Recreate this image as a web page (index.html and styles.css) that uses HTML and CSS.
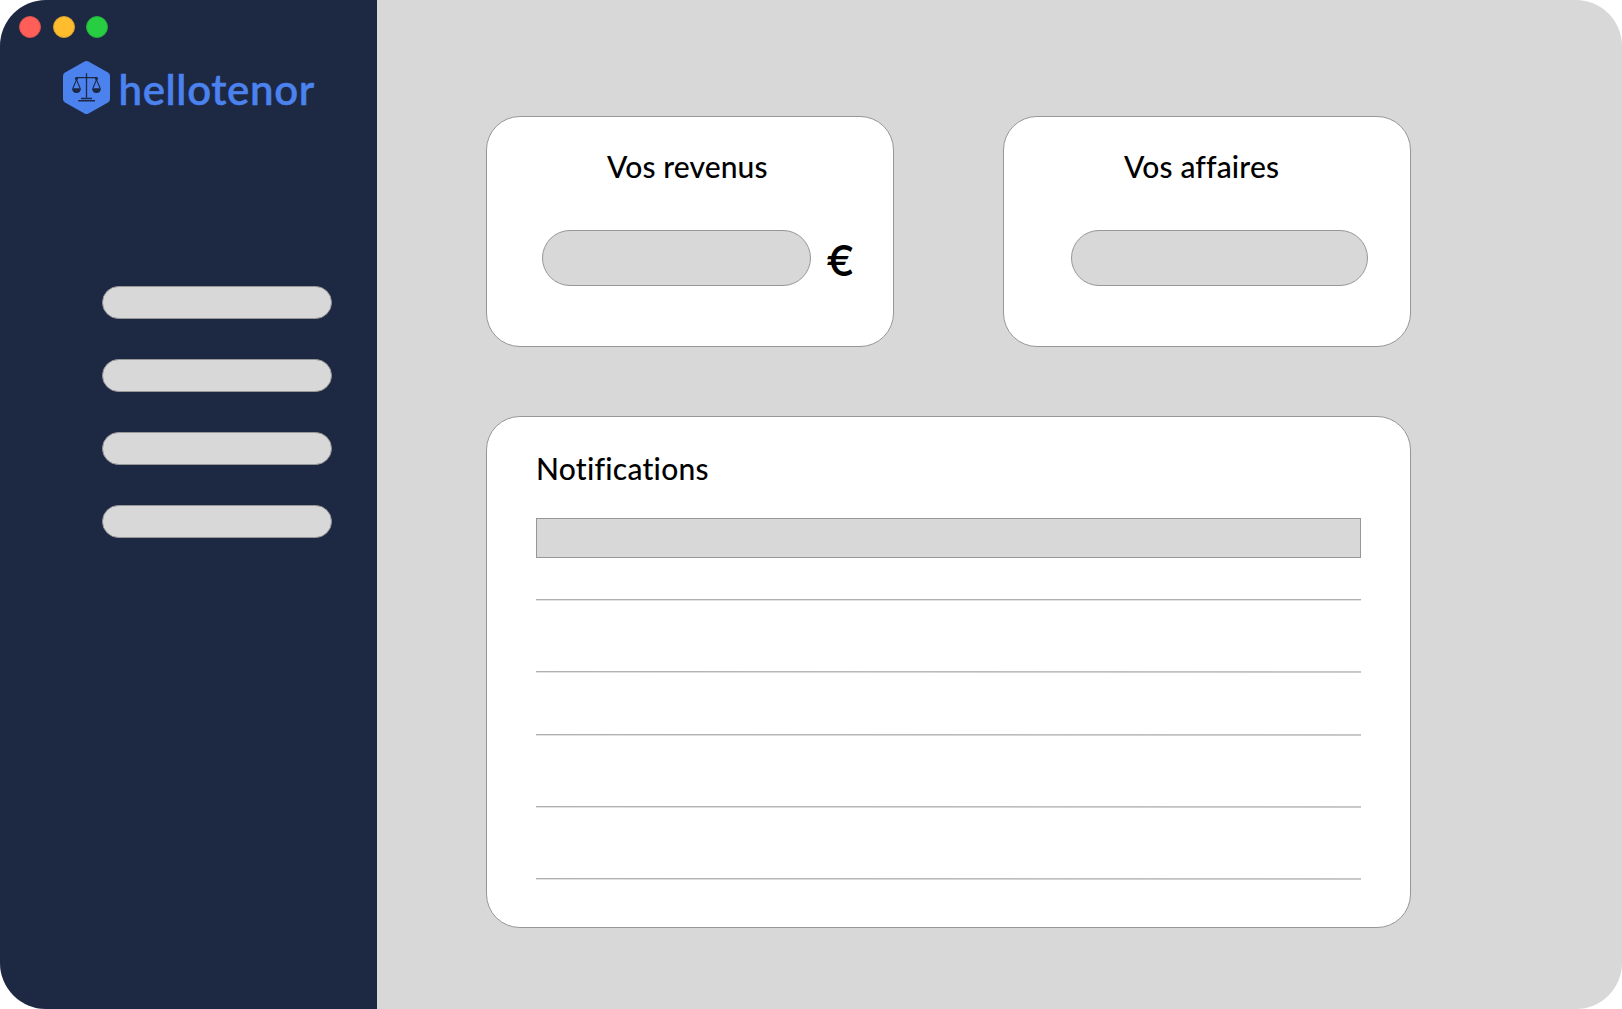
FILE: index.html
```html
<!DOCTYPE html>
<html lang="fr">
<head>
<meta charset="utf-8">
<title>hellotenor</title>
<link rel="stylesheet" href="styles.css">
</head>
<body>
<div class="window">
  <aside class="sidebar">
    <div class="controls">
      <span class="dot close"></span><span class="dot minimize"></span><span class="dot expand"></span>
    </div>
    <div class="brand">
      <svg class="brand-icon" width="47" height="53" viewBox="0 0 47 54" preserveAspectRatio="none">
        <path class="hexagon" d="M21.5 .6Q23.5-.5 25.5 .6L45 11.7Q47 12.9 47 15.2V38.8Q47 41.1 45 42.3L25.5 53.4Q23.5 54.5 21.5 53.4L2 42.3Q0 41.1 0 38.8V15.2Q0 12.9 2 11.7Z"/>
        <g class="scales">
          <path d="M23.5 12.5V37.5M13 17H34" stroke-width="1.3"/>
          <path d="M18 38.2H29M15.2 40.6H32" stroke-width="1.5"/>
          <path d="M13.5 19L10 27.5M13.5 19L17 27.5M33.5 19L30 27.5M33.5 19L37 27.5" stroke-width="1.1"/>
          <path class="pan" d="M9 27.8H18Q17.8 32.6 13.5 32.6T9 27.8ZM29 27.8H38Q37.8 32.6 33.5 32.6T29 27.8Z"/>
          <circle class="pan" cx="13.5" cy="17.8" r="1.6"/><circle class="pan" cx="33.5" cy="17.8" r="1.6"/>
        </g>
      </svg>
      <span class="brand-name">hellotenor</span>
    </div>
    <nav class="menu">
      <span class="menu-item"></span><span class="menu-item"></span><span class="menu-item"></span><span class="menu-item"></span>
    </nav>
  </aside>
  <main class="content">
    <section class="card">
      <h2 class="title revenue-title">Vos revenus</h2>
      <div class="value-row"><span class="value"></span><span class="currency">€</span></div>
    </section>
    <section class="card">
      <h2 class="title cases-title">Vos affaires</h2>
      <div class="value-row cases-row"><span class="value"></span></div>
    </section>
    <section class="card notifications">
      <h2 class="title">Notifications</h2>
      <div class="highlight"></div>
      <div class="rows">
        <hr class="rule"><hr class="rule"><hr class="rule"><hr class="rule"><hr class="rule">
      </div>
    </section>
  </main>
</div>
</body>
</html>
```
FILE: styles.css
```css
* { box-sizing: border-box; }
body { margin: 0; background: #fff; font-family: Lato, sans-serif; }
.window { display: flex; width: 1622px; height: 1009px; border-radius: 46px; overflow: hidden; background: #d8d8d8; }
.sidebar { width: 377px; flex: none; background: #1d2842; }
.controls { display: flex; gap: 12px; padding: 16px 0 0 19px; }
.dot { width: 22px; height: 22px; border-radius: 50%; border: 1px solid; }
.close { background: #ff5f58; border-color: #d8504e; }
.minimize { background: #ffbd2e; border-color: #d6a02f; }
.expand { background: #28ce42; border-color: #25ac3e; margin-left: -1px; }
.brand { display: flex; height: 54px; margin-top: 23px; padding-left: 63px; }
.brand-icon { flex: none; }
.hexagon { fill: #4b82ee; }
.scales { fill: none; stroke: #1d2842; }
.scales .pan { fill: #1d2842; stroke: none; }
.brand-name { margin-left: 8.5px; font-size: 42px; line-height: 57px; font-weight: 600; letter-spacing: .6px; color: #4b82ee; white-space: nowrap; -webkit-text-stroke: .4px #4b82ee; }
.menu { display: flex; flex-direction: column; gap: 40px; padding: 171px 0 0 102px; }
.menu-item { width: 230px; height: 33px; border: 1px solid #979797; border-radius: 17px; background: #d8d8d8; }
.content { display: grid; grid-template-columns: 408px 408px; grid-template-rows: 231px 512px; gap: 69px 109px; padding: 116px 0 0 109px; align-content: start; }
.card { background: #fff; border: 1px solid #979797; border-radius: 34px; }
.title { margin: 0; font-size: 30px; line-height: 36px; font-weight: 500; letter-spacing: .25px; color: #000; white-space: nowrap; }
.card > .title { padding-top: 31px; }
.revenue-title { padding-left: 120px; letter-spacing: .1px; }
.cases-title { padding-left: 120px; letter-spacing: .15px; }
.value-row { display: flex; align-items: center; height: 56px; margin-top: 46px; padding-left: 55px; }
.value { width: 269px; height: 56px; border: 1px solid #979797; border-radius: 28px; background: #d8d8d8; }
.currency { margin-left: 15px; padding-top: 3px; font-family: Inter, sans-serif; font-size: 43px; font-weight: 500; line-height: 56px; }
.cases-row { padding-left: 67px; }
.cases-row .value { width: 297px; }
.notifications { grid-column: 1 / 3; padding: 0 49px; }
.notifications > .title { padding-top: 33px; }
.highlight { height: 40px; margin-top: 32px; background: #d8d8d8; border: 1px solid #979797; }
.rows { padding-top: 41px; }
.rule { height: 2px; margin: 0 0 70px; border: 0; background: linear-gradient(90deg, #b0b0b0, #c6c6c6) top / 100% 1px no-repeat, linear-gradient(90deg, #e2e2e2, #cbcbcb) bottom / 100% 1px no-repeat; }
.rule:first-child { background: linear-gradient(#b0b0b0 50%, #e2e2e2 50%); }
.rule:nth-child(2) { margin-bottom: 61px; }
```
